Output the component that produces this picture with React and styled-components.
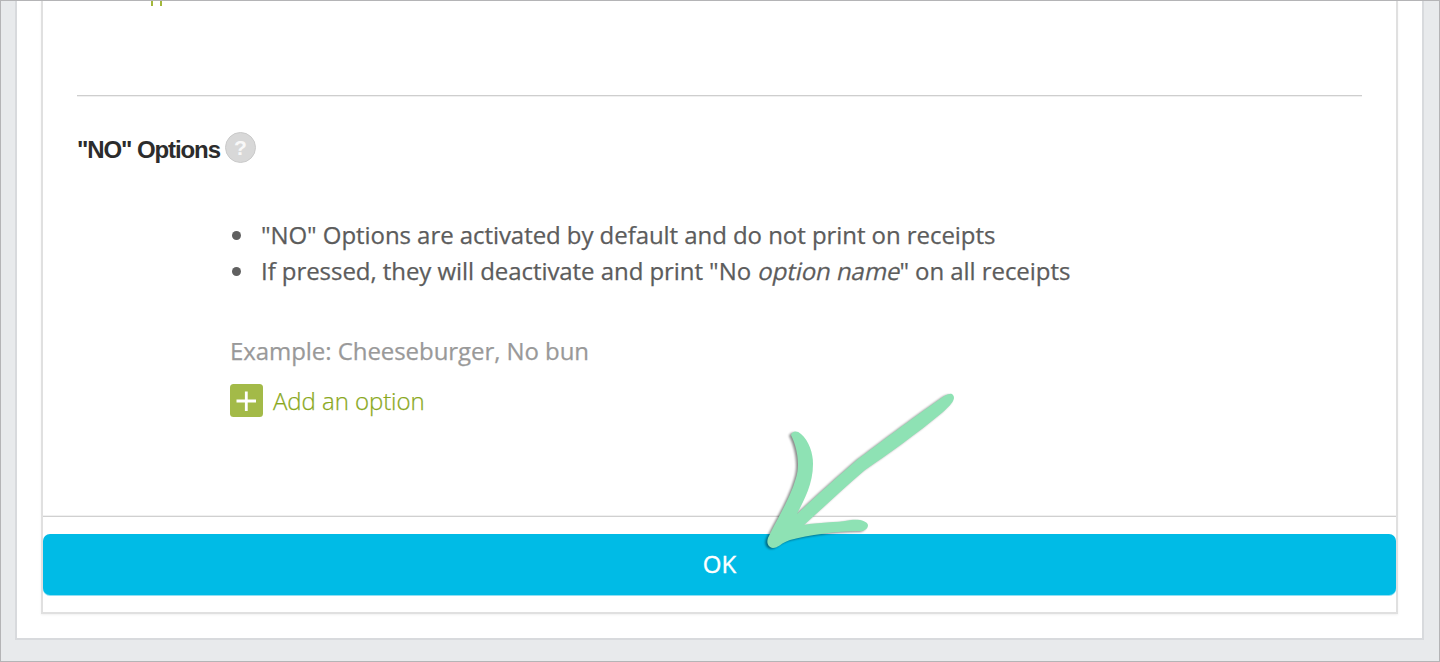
import React from "react";
import styled, { createGlobalStyle } from "styled-components";

const GlobalStyle = createGlobalStyle`
  * {
    box-sizing: border-box;
  }
  body {
    margin: 0;
    font-family: "Open Sans", sans-serif;
  }
`;

const Page = styled.div`
  position: relative;
  height: 662px;
  padding: 0 15px 22px;
  background-color: #e8eaec;
  border: 1px solid #b4b4b6;
  overflow: hidden;
`;

const Panel = styled.div`
  height: 639px;
  margin-left: -1px;
  padding: 0 24px;
  background-color: #fff;
  border: 2px solid #d8dadd;
  border-top: none;
`;

const Modal = styled.div`
  height: 613px;
  border: 2px solid #e0e0e0;
  border-top: none;
  box-shadow: 0 1px 2px rgba(0, 0, 0, 0.06);
`;

const Content = styled.div`
  height: 516px;
  padding: 0 34px;
  border-bottom: 1px solid #d0d0d0;
  box-shadow: 0 -1px 0 #f0f0f0 inset;
`;

const Previous = styled.div`
  display: flex;
  gap: 7px;
  height: 95px;
  padding-left: 74px;
  border-bottom: 1px solid #cecece;
  box-shadow: 0 1px 0 #f0f0f0;
`;

const Stem = styled.span`
  width: 2px;
  height: 5px;
  background-color: #a3b83c;
`;

const Heading = styled.div`
  display: flex;
  align-items: center;
  height: 31px;
  margin-top: 36px;
`;

const Title = styled.h2`
  margin: 4px 0 0;
  width: 148px;
  font: bold 24px "Liberation Sans", sans-serif;
  letter-spacing: -1.1px;
  color: #2c2c2c;
  white-space: nowrap;
`;

const Help = styled.span`
  display: flex;
  align-items: center;
  justify-content: center;
  width: 31px;
  height: 31px;
  border: 1px solid #cacaca;
  border-radius: 50%;
  background-color: #d8d8d8;
  color: #f8f8f8;
  font: bold 21px "Liberation Sans", sans-serif;
`;

const Body = styled.div`
  padding: 54px 0 0 153px;
  font-size: 24px;
  letter-spacing: -0.06px;
  -webkit-text-stroke: 0.25px currentColor;
`;

const List = styled.ul`
  margin: 0;
  padding: 0;
  list-style: none;
  color: #5c5c5c;
`;

const Item = styled.li`
  display: flex;
  align-items: center;
  height: 36px;
  line-height: 36px;
  white-space: pre;

  &::before {
    content: "";
    width: 9px;
    height: 9px;
    margin: 0 20px 0 2px;
    border-radius: 50%;
    background-color: #606060;
  }
`;

const OptionName = styled.em`
  display: inline-block;
  font-style: normal;
  transform: skewX(-12deg);
  transform-origin: 0 27px;
`;

const Example = styled.p`
  margin: 44px 0 0;
  line-height: 36px;
  color: #999;
`;

const AddLink = styled.a`
  display: flex;
  align-items: center;
  gap: 10px;
  height: 33px;
  margin-top: 15px;
  color: #8aa81c;
  font-weight: 300;
`;

const Footer = styled.div`
  padding-top: 17px;
`;

const OkButton = styled.button`
  display: block;
  width: 100%;
  height: 61px;
  padding: 0 0 2px;
  border: none;
  border-radius: 7px;
  background-color: #00bbe6;
  box-shadow: 0 1px 0 #8fdff3;
  color: #fff;
  font: 24px "Open Sans", sans-serif;
  -webkit-text-stroke: 0.4px #fff;
`;

const Arrow = styled.svg`
  position: absolute;
  left: 739px;
  top: 379px;
  filter: drop-shadow(-1.5px 1px 1px rgba(0, 0, 0, 0.45));
`;

function PlusIcon() {
  return (
    <svg width="33" height="33" viewBox="0 0 33 33">
      <rect width="33" height="33" rx="3.5" fill="#a3ba48" />
      <path d="M6.5 17H26M16.3 7.5V27" stroke="#fff" strokeWidth="2.8" />
    </svg>
  );
}

function App() {
  return (
    <>
      <GlobalStyle />
      <Page>
        <Panel>
          <Modal>
            <Content>
              <Previous>
                <Stem />
                <Stem />
              </Previous>
              <Heading>
                <Title>"NO" Options</Title>
                <Help>?</Help>
              </Heading>
              <Body>
                <List>
                  <Item>
                    <span>"NO" Options are activated by default and do not print on receipts</span>
                  </Item>
                  <Item>
                    <span>
                      If pressed, they will deactivate and print "No{" "}
                      <OptionName>option name</OptionName>" on all receipts
                    </span>
                  </Item>
                </List>
                <Example>Example: Cheeseburger, No bun</Example>
                <AddLink>
                  <PlusIcon />
                  Add an option
                </AddLink>
              </Body>
            </Content>
            <Footer>
              <OkButton>OK</OkButton>
            </Footer>
          </Modal>
        </Panel>
        <Arrow width="240" height="180" viewBox="0 0 240 180">
          <path
            fill="#8ee2b4"
            d="M51 55C52 51 57 50 61 54C69 61 73 73 73 84C73 104 64 120 57 134C77 115 101 94 118 79C137 65 174 37 200 19C205 15 211 12 213 15C216 19 212 24 203 32C178 53 148 74 125 90C105 107 84 127 64 145C78 142 96 143 111 140C120 139 127 141 128 145C128 149 124 151 120 151C97 151 68 155 50 160C41 163 38 168 33 168C27 167 26 161 29 156C36 141 50 119 56 98C60 86 58 69 51 55Z"
          />
        </Arrow>
      </Page>
    </>
  );
}

export default App;
